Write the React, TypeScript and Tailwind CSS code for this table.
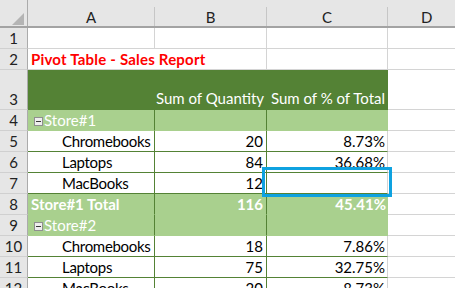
import React from "react";

function RowHead({ n, h = "h-[21px]" }: { n: number; h?: string }) {
  return (
    <div
      className={`${h} w-[28px] shrink-0 flex items-end justify-center bg-[#e6e6e6] border-r border-r-[#ababab] border-b border-b-[#d0d0d0] text-[15px] leading-[20px] text-[#222]`}
    >
      <span>{n}</span>
    </div>
  );
}

function C({
  w,
  cls,
  children,
}: {
  w: string;
  cls: string;
  children?: React.ReactNode;
}) {
  return (
    <div className={`${w} shrink-0 h-full flex items-end whitespace-nowrap text-[15px] leading-[20px] ${cls}`}>
      {children}
    </div>
  );
}

function D() {
  return <div className="flex-1 h-full bg-white border-b border-b-[#d4d4d4]" />;
}

function Minus() {
  return (
    <span className="mb-[4px] ml-[6px] mr-[1px] w-[9px] h-[9px] border border-[#8f8f8f] bg-[#eeeeee] flex items-center justify-center">
      <span className="w-[5px] h-px bg-[#3a3a3a]" />
    </span>
  );
}

function Detail({ n, name, q, p }: { n: number; name: string; q: string; p: string }) {
  return (
    <div className="flex h-[21px]">
      <RowHead n={n} />
      <C w="w-[127px]" cls="bg-white border-r border-r-[#548235] border-b border-b-[#548235] pl-[34px] text-black">
        <span className="tracking-[-0.3px]">{name}</span>
      </C>
      <C w="w-[112px]" cls="bg-white border-r border-r-[#548235] border-b border-b-[#548235] justify-end pr-[3px] text-black">
        {q}
      </C>
      <C w="w-[121px]" cls="bg-white border-r border-r-[#d4d4d4] border-b border-b-[#548235] justify-end pr-[2px] text-black">
        {p}
      </C>
      <D />
    </div>
  );
}

function StoreRow({ n, name }: { n: number; name: string }) {
  return (
    <div className="flex h-[21px]">
      <RowHead n={n} />
      <C w="w-[127px]" cls="bg-[#a9d08e] border-r border-r-[#548235] border-b border-b-[#a9d08e] text-white">
        <Minus />
        <span>{name}</span>
      </C>
      <C w="w-[112px]" cls="bg-[#a9d08e] border-r border-r-[#548235] border-b border-b-[#a9d08e]" />
      <C w="w-[121px]" cls="bg-[#a9d08e] border-b border-b-[#a9d08e]" />
      <D />
    </div>
  );
}

export default function App() {
  return (
    <div className="relative w-[455px] h-[288px] overflow-hidden bg-white [font-family:Lato,'Liberation_Sans',sans-serif]">
      {/* column header */}
      <div className="flex h-[28px] bg-[#e6e6e6] border-b-2 border-b-[#a3a3a3] text-[15px] leading-[20px] text-[#222]">
        <div className="w-[28px] shrink-0 flex items-end justify-end pr-[3px] pb-[1px] border-r border-r-[#ababab]">
          <svg width="12" height="12" viewBox="0 0 12 12">
            <polygon points="12,0 12,12 0,12" fill="#b4b4b4" />
          </svg>
        </div>
        <div className="w-[127px] shrink-0 flex">
          <div className="flex-1 text-center pt-[7px]">A</div>
          <div className="self-end h-[19px] w-px bg-[#c6c6c6]" />
        </div>
        <div className="w-[112px] shrink-0 flex">
          <div className="flex-1 text-center pt-[7px]">B</div>
          <div className="self-end h-[19px] w-px bg-[#c6c6c6]" />
        </div>
        <div className="w-[121px] shrink-0 flex">
          <div className="flex-1 text-center pt-[7px]">C</div>
          <div className="self-end h-[19px] w-px bg-[#c6c6c6]" />
        </div>
        <div className="flex-1 pt-[7px] pl-[33px]">D</div>
      </div>

      {/* row 1 */}
      <div className="flex h-[21px]">
        <RowHead n={1} />
        <C w="w-[127px]" cls="border-r border-r-[#d4d4d4] border-b border-b-[#d4d4d4]" />
        <C w="w-[112px]" cls="border-r border-r-[#d4d4d4] border-b border-b-[#d4d4d4]" />
        <C w="w-[121px]" cls="border-r border-r-[#d4d4d4] border-b border-b-[#d4d4d4]" />
        <D />
      </div>

      {/* row 2 */}
      <div className="flex h-[21px]">
        <RowHead n={2} />
        <C w="w-[127px]" cls="border-b border-b-[#d4d4d4] pl-[3px] font-bold text-[#ff0000] tracking-[0.2px] relative z-10">
          Pivot Table - Sales Report
        </C>
        <C w="w-[112px]" cls="border-r border-r-[#d4d4d4] border-b border-b-[#d4d4d4]" />
        <C w="w-[121px]" cls="border-r border-r-[#d4d4d4] border-b border-b-[#d4d4d4]" />
        <D />
      </div>

      {/* row 3 */}
      <div className="flex h-[40px]">
        <RowHead n={3} h="h-[40px]" />
        <C w="w-[127px]" cls="bg-[#548235] border-b border-b-[#548235]" />
        <C w="w-[112px]" cls="bg-[#548235] border-b border-b-[#548235] justify-end pr-[3px] text-white pb-px">
          Sum of Quantity
        </C>
        <C w="w-[121px]" cls="bg-[#548235] border-b border-b-[#548235] justify-end pr-[3px] text-white pb-px">
          Sum of % of Total
        </C>
        <D />
      </div>

      <StoreRow n={4} name="Store#1" />
      <Detail n={5} name="Chromebooks" q="20" p="8.73%" />
      <Detail n={6} name="Laptops" q="84" p="36.68%" />
      <Detail n={7} name="MacBooks" q="12" p="" />

      {/* row 8 */}
      <div className="flex h-[21px]">
        <RowHead n={8} />
        <C w="w-[127px]" cls="bg-[#a9d08e] border-r border-r-[#548235] border-b border-b-[#a9d08e] pl-[3px] font-bold text-white">
          Store#1 Total
        </C>
        <C w="w-[112px]" cls="bg-[#a9d08e] border-r border-r-[#548235] border-b border-b-[#a9d08e] justify-end pr-[3px] font-bold text-white">
          116
        </C>
        <C w="w-[121px]" cls="bg-[#a9d08e] border-b border-b-[#a9d08e] justify-end pr-[2px] font-bold text-white">
          45.41%
        </C>
        <D />
      </div>

      <StoreRow n={9} name="Store#2" />
      <Detail n={10} name="Chromebooks" q="18" p="7.86%" />
      <Detail n={11} name="Laptops" q="75" p="32.75%" />
      <Detail n={12} name="MacBooks" q="20" p="8.73%" />

      {/* selection box */}
      <div className="absolute left-[262px] top-[167px] w-[130px] h-[30px] border-[3px] border-[#0ea2e0]" />
    </div>
  );
}
